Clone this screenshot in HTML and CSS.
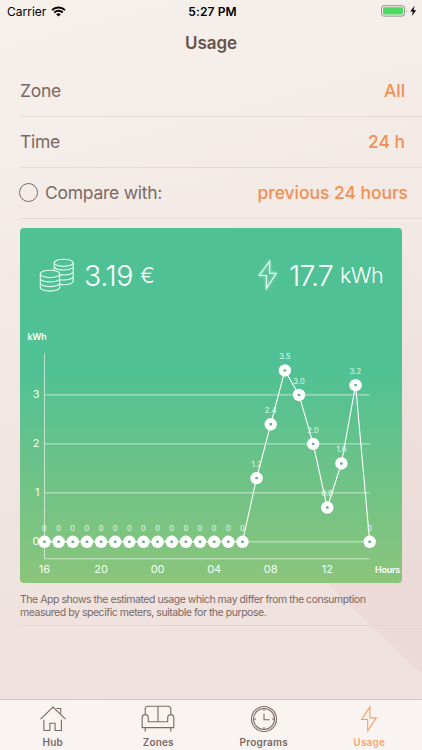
FILE: index.html
```html
<!DOCTYPE html>
<html lang="en">
<head>
  <meta charset="UTF-8" />
  <meta name="viewport" content="width=device-width, initial-scale=1" />
  <title>Usage</title>
  <link rel="stylesheet" href="styles.css">
</head>
<body>

  <div class="statusbar">
    <div class="carrier">
      <span>Carrier</span>
      <svg width="15" height="11" viewBox="0 0 15 11">
        <path d="M1 4.1a9.3 9.3 0 0 1 13 0M3.3 6.5a6 6 0 0 1 8.4 0" fill="none" stroke="#000" stroke-width="2" />
        <path d="M7.5 10.6L5.2 8.3a3.3 3.3 0 0 1 4.6 0z" />
      </svg>
    </div>
    <div class="time">5:27 PM</div>
    <div class="battery">
      <svg width="36" height="12" viewBox="0 0 36 12">
        <rect x=".5" y=".7" width="23" height="10.4" rx="2.4" fill="none" stroke="#8f938c" />
        <rect x="2" y="2.2" width="20" height="7.4" rx="1" fill="#4cd964" />
        <path d="M25 4.2q1.6 1.7 0 3.4z" fill="#8f938c" />
        <path d="M33.6.8L29.2 6.6h2.7l-1.1 4.4 4.4-5.8h-2.7z" />
      </svg>
    </div>
  </div>

  <h1>Usage</h1>

  <div class="row">
    <span class="label">Zone</span>
    <span class="value">All</span>
  </div>
  <div class="row">
    <span class="label">Time</span>
    <span class="value">24 h</span>
  </div>
  <div class="row compare">
    <span class="radio"></span>
    <span class="label">Compare with:</span>
    <span class="value">previous 24 hours</span>
  </div>

  <div class="card">
    <div class="summary">
      <svg class="coins" width="36" height="34" viewBox="0 0 36 34">
        <ellipse cx="24.7" cy="4.8" rx="9.5" ry="3.6" />
        <path d="M15.2 4.8v7M34.2 4.8v18.3c0 2-4.2 3.6-9.5 3.6q-2 0-3.4-.3M15.4 9.4c1.2 1.6 4.9 2.6 9.3 2.6 5.3 0 9.5-1.6 9.5-3.6M20.6 16.6q1.8.4 4.1.4c5.3 0 9.5-1.6 9.5-3.6M21.2 21.8q1.7.2 3.5.2c5.3 0 9.5-1.6 9.5-3.6" />
        <ellipse cx="11" cy="15.9" rx="9.7" ry="3.6" />
        <path d="M1.3 15.9v13.6c0 2 4.3 3.6 9.7 3.6s9.7-1.6 9.7-3.6V15.9M1.3 20.4c0 2 4.3 3.6 9.7 3.6s9.7-1.6 9.7-3.6M1.3 25c0 2 4.3 3.6 9.7 3.6s9.7-1.6 9.7-3.6" />
      </svg>
      <span class="cost">3.19</span>
      <span class="unit">€</span>
      <svg class="bolt" width="20" height="30" viewBox="0 0 20 30">
        <path d="M11.6 1.2L1.2 15.5h7.2v13L18.2 13.2h-6.6z" />
      </svg>
      <span class="energy">17.7</span>
      <span class="unit kwh">kWh</span>
    </div>
    <svg id="chart" width="382" height="261" viewBox="20 322 382 261"></svg>
  </div>

  <p class="note">The App shows the estimated usage which may differ from the consumption<br>measured by specific meters, suitable for the purpose.</p>

  <nav class="tabs">
    <div class="tab">
      <svg width="28" height="28" viewBox="0 0 28 28">
        <path d="M1.5 14.2L14 2l12.5 12.2M17.5 3.5h4.2v5M4.9 14.8v10.7h6v-7.2h5.2v7.2h6.3V14.8" />
      </svg>
      <span>Hub</span>
    </div>
    <div class="tab">
      <svg width="34" height="28" viewBox="0 0 34 28">
        <path d="M4.2 10V4.2a3 3 0 0 1 3-3h19.6a3 3 0 0 1 3 3V10M17 1.2v15.6M7.3 16.8h19.4v-4c0-4.3 6.1-4.3 6.1 0v9.8H1.2v-9.8c0-4.3 6.1-4.3 6.1 0zM4.2 22.6v3.8M29.8 22.6v3.8" />
      </svg>
      <span>Zones</span>
    </div>
    <div class="tab">
      <svg width="28" height="28" viewBox="0 0 28 28">
        <circle cx="14" cy="14" r="12.5" />
        <circle cx="14" cy="14" r="10.5" />
        <path d="M14 8.8v6h5.5M14 3.8v2.2M14 22v2.2M3.8 14H6M22 14h2.2" />
      </svg>
      <span>Programs</span>
    </div>
    <div class="tab active">
      <svg width="20" height="28" viewBox="0 0 20 28">
        <path d="M10.9 1.9L2.6 14.5h6.1v11.4l8.6-13h-6.4z" />
      </svg>
      <span>Usage</span>
    </div>
  </nav>

  <script>
    const points = [
      [0, '0'], [0, '0'], [0, '0'], [0, '0'], [0, '0'], [0, '0'], [0, '0'], [0, '0'],
      [0, '0'], [0, '0'], [0, '0'], [0, '0'], [0, '0'], [0, '0'], [0, '0'],
      [1.3, '1.2'], [2.4, '2.4'], [3.5, '3.5'], [3, '3.0'], [2, '2.0'],
      [0.7, '0.6'], [1.6, '1.6'], [3.2, '3.2'], [0, '0']
    ];
    const hours = ['16', '20', '00', '04', '08', '12'];

    const left = 44.5;
    const right = 369.7;
    const baseY = 541.8;
    const step = (right - left) / (points.length - 1);
    const x = i => left + i * step;
    const y = v => baseY - v * 48.95;

    let svg = `<text class="axis-name" x="27.5" y="340">kWh</text>`;
    svg += `<path class="axis" d="M${left} 353.5V558.8H${right}" />`;

    for (let v = 0; v <= 3; v++) {
      svg += `<path class="grid" d="M${left} ${y(v)}H${right}" />`;
      svg += `<text class="tick" x="39.5" y="${y(v) + 3.3}" text-anchor="end">${v}</text>`;
    }

    hours.forEach((h, i) => {
      svg += `<text class="tick" x="${x(i * 4)}" y="573" text-anchor="middle">${h}</text>`;
    });
    svg += `<text class="axis-name" x="375" y="573">Hours</text>`;

    svg += `<polyline class="line" points="${points.map((p, i) => x(i) + ',' + y(p[0])).join(' ')}" />`;

    points.forEach((p, i) => {
      const px = x(i), py = y(p[0]);
      svg += `<text class="val" x="${px}" y="${py - 11.3}" text-anchor="middle">${p[1]}</text>`;
      svg += `<circle class="dot" cx="${px}" cy="${py}" r="6.2" />`;
      svg += `<rect class="hole" x="${px - 1.4}" y="${py - 1.2}" width="2.8" height="2.4" rx=".8" />`;
    });

    document.getElementById('chart').innerHTML = svg;
  </script>

</body>
</html>
```

FILE: styles.css
```css
* {
  box-sizing: border-box;
}

body {
  position: relative;
  z-index: 0;
  margin: 0;
  width: 422px;
  height: 750px;
  overflow: hidden;
  display: flex;
  flex-direction: column;
  font-family: Inter, "Liberation Sans", sans-serif;
  color: #796966;
  background: linear-gradient(165deg, #f5f0eb 0%, #f5ede9 18%, #f0e4e0 60%, #eee0dd 100%);
}

/* darker facet of the backdrop */
body::before {
  content: "";
  position: absolute;
  z-index: -1;
  top: 250px;
  right: 0;
  width: 442px;
  height: 424px;
  background: linear-gradient(transparent, #ebdad7 85%);
  clip-path: polygon(0 0, 100% 0, 100% 100%);
}

.statusbar {
  display: grid;
  grid-template-columns: 1fr auto 1fr;
  align-items: center;
  height: 22px;
  padding: 0 5px 0 7px;
  font-size: 12px;
  color: #000;
}

.carrier {
  display: flex;
  align-items: center;
  gap: 5px;
}

.time {
  padding-left: 1px;
  font-weight: 600;
  letter-spacing: 0.1px;
}

.battery {
  display: flex;
  justify-content: flex-end;
}

h1 {
  margin: 0;
  height: 44px;
  line-height: 43px;
  text-align: center;
  font-size: 17px;
  font-weight: 600;
  letter-spacing: -0.1px;
  color: #65544f;
}

.row {
  display: flex;
  align-items: center;
  height: 51px;
  margin-left: 20px;
  padding: 0 17px 2px 0;
  border-bottom: 1px solid #e6dbd8;
  font-size: 17.5px;
}

.row .label {
  letter-spacing: -0.25px;
}

.row .value {
  margin-left: auto;
  color: #f28f52;
  font-weight: 500;
  letter-spacing: -0.05px;
}

.compare {
  padding-right: 14px;
}

.radio {
  width: 19px;
  height: 19px;
  margin: 0 7px 0 -1px;
  border: 1px solid #796966;
  border-radius: 50%;
}

.card {
  width: 382px;
  height: 355px;
  margin: 9px 0 0 20px;
  border-radius: 4px;
  background: linear-gradient(#50c194 0%, #50c194 40%, #8bc57b 100%);
}

.summary {
  display: flex;
  align-items: center;
  height: 94px;
  padding: 0 19px;
  color: #fff;
  font-weight: 300;
}

.summary svg {
  fill: none;
  stroke: #e6fff3;
  stroke-width: 1.1;
}

.cost,
.energy {
  font-size: 28.5px;
  letter-spacing: -0.4px;
}

.cost {
  margin-left: 9px;
}

.unit {
  margin-left: 7px;
  font-size: 22px;
}

.kwh {
  font-size: 21.5px;
  letter-spacing: -0.6px;
}

.bolt {
  margin-left: auto;
  filter: drop-shadow(0 0 1.5px rgba(255, 255, 255, 0.7));
}

.energy {
  margin-left: 11px;
  letter-spacing: -0.8px;
}

#chart {
  display: block;
  font-size: 11px;
  fill: #fff;
}

.axis {
  fill: none;
  stroke: rgba(255, 255, 255, 0.6);
}

.grid {
  stroke: rgba(255, 255, 255, 0.6);
}

.tick {
  fill: #f2fff5;
}

.axis-name {
  font-size: 9px;
  font-weight: 600;
  letter-spacing: -0.25px;
}

.line {
  fill: none;
  stroke: #fff;
  stroke-width: 1.1;
}

.val {
  font-size: 7.5px;
  fill: #e6fbef;
  letter-spacing: 0.1px;
}

.hole {
  fill: #6fae86;
}

.note {
  height: 43px;
  margin: 0 0 0 20px;
  padding-top: 9.5px;
  border-bottom: 1px solid #e2d5d2;
  font-size: 10.5px;
  line-height: 13.3px;
  letter-spacing: -0.46px;
}

.tabs {
  display: grid;
  grid-template-columns: repeat(4, 1fr);
  height: 51px;
  margin-top: auto;
  border-top: 1px solid #d3c7c5;
  background: #f9f4f2;
}

.tab {
  display: flex;
  flex-direction: column;
  align-items: center;
  padding-top: 5px;
  font-size: 10px;
  line-height: 18px;
  font-weight: 600;
  letter-spacing: 0.2px;
}

.tab svg {
  fill: none;
  stroke: #796966;
  stroke-width: 1.1;
}

.tab.active {
  color: #f5a870;
}

.tab.active svg {
  stroke: #f2a065;
}
```
